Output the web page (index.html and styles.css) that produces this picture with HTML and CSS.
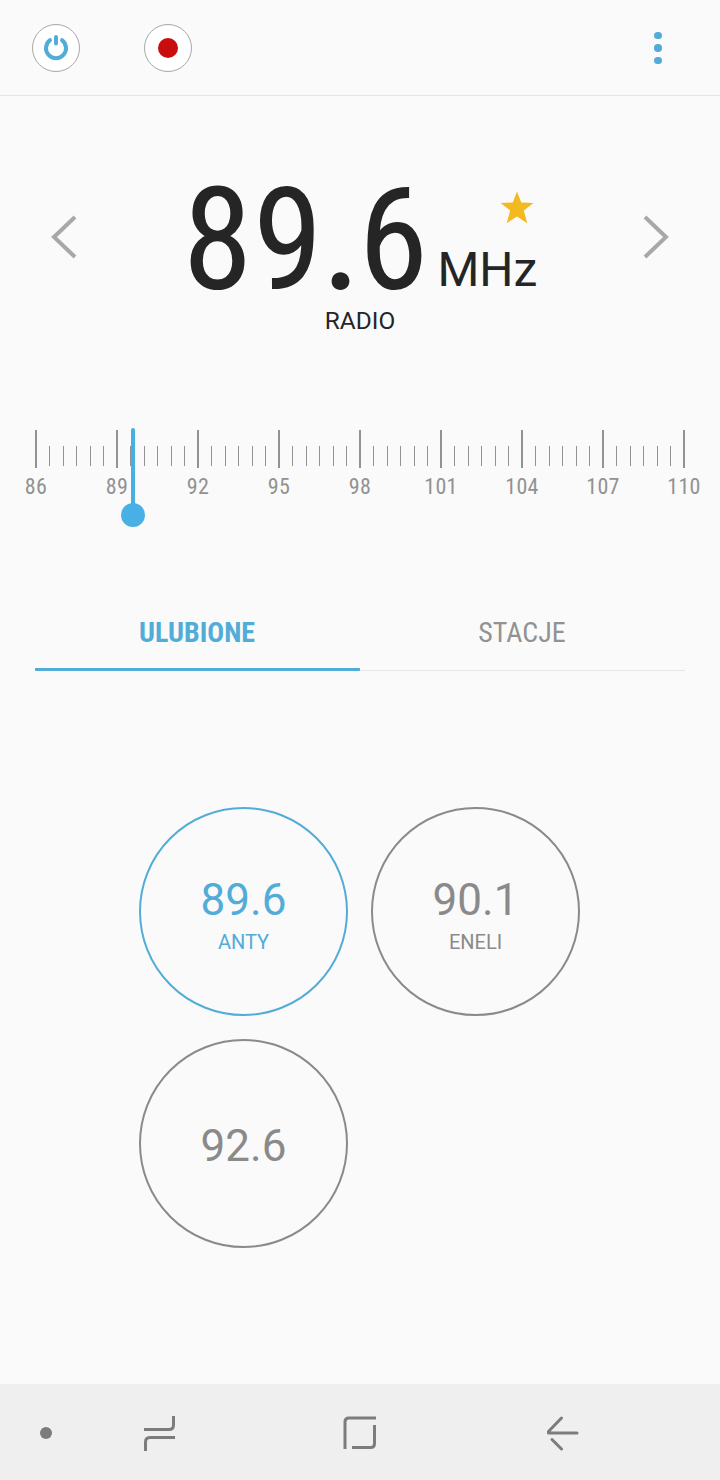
FILE: index.html
```html
<!DOCTYPE html>
<html lang="pl">
<head>
    <meta charset="UTF-8">
    <meta name="viewport" content="width=device-width, initial-scale=1.0">
    <title>Radio</title>
    <link rel="stylesheet" href="styles.css">
</head>
<body>
    <header class="toolbar">
        <button class="round-btn" aria-label="Power">
            <svg width="26" height="28" viewBox="0 0 26 28" fill="none" stroke="#52acd8" stroke-width="4" stroke-linecap="round">
                <path d="M13 3v6.500M7 6.200a10 10 0 1 0 12 0"/>
            </svg>
        </button>
        <button class="round-btn" aria-label="Record"><span class="rec-dot"></span></button>
        <button class="menu-btn" aria-label="Menu"><i></i><i></i><i></i></button>
    </header>

    <section class="tuner">
        <button class="arrow" aria-label="Previous">
            <svg width="28" height="46" viewBox="0 0 28 46"><path d="M25 3L4 23l21 20"/></svg>
        </button>
        <div class="display">
            <div class="frequency">
                <span class="value">89<span class="dot">.</span>6</span>
                <div class="unit">
                    <svg class="star" width="34" height="34" viewBox="0 0 34 34"><path d="M17 .5l4.300 11 12.200.4-9.700 7.600 3.500 12.700L17 25.500 6.700 32.200l3.500-12.700L.5 11.900l12.200-.4z"/></svg>
                    <span>MHz</span>
                </div>
            </div>
            <div class="station">RADIO</div>
        </div>
        <button class="arrow" aria-label="Next">
            <svg width="28" height="46" viewBox="0 0 28 46"><path d="M3 3l21 20L3 43"/></svg>
        </button>
    </section>

    <section class="scale">
        <svg class="ticks" width="650" height="38" viewBox="0 0 650 38">
            <defs>
                <g id="step">
                    <path class="major" d="M1 0v38"/>
                    <path class="minor" d="M14.5 16v20M28.5 16v20M41.5 16v20M55.5 16v20M68.5 16v20"/>
                </g>
            </defs>
            <use href="#step"/>
            <use href="#step" x="81"/>
            <use href="#step" x="162"/>
            <use href="#step" x="243"/>
            <use href="#step" x="324"/>
            <use href="#step" x="405"/>
            <use href="#step" x="486"/>
            <use href="#step" x="567"/>
            <path class="major" d="M649 0v38"/>
        </svg>
        <div class="labels">
            <span>86</span><span>89</span><span>92</span><span>95</span><span>98</span><span>101</span><span>104</span><span>107</span><span>110</span>
        </div>
        <div class="needle"></div>
    </section>

    <nav class="tabs">
        <a class="tab active">ULUBIONE</a>
        <a class="tab">STACJE</a>
    </nav>

    <main class="favorites">
        <div class="favorite active"><span class="num">89.6</span><span class="name">ANTY</span></div>
        <div class="favorite"><span class="num">90.1</span><span class="name">ENELI</span></div>
        <div class="favorite"><span class="num">92.6</span></div>
    </main>

    <footer class="navbar">
        <span class="nav-dot"></span>
        <svg class="recents" width="32" height="36" viewBox="0 0 32 36"><path d="M0 14.5h25q4.500 0 4.500-4.500V1M31 22.500H6q-4.500 0-4.500 4.500V36"/></svg>
        <svg class="home" width="34" height="34" viewBox="0 0 34 34"><path d="M33 2H6Q2 2 2 6v27M31.500 9v18.500q0 4-4 4H9"/></svg>
        <svg class="back" width="34" height="36" viewBox="0 0 34 36"><path d="M15.500 3L2.500 16.500V18H31M6 24.500L15.500 34"/></svg>
    </footer>
</body>
</html>
```

FILE: styles.css
```css
* {
    box-sizing: border-box;
}
body {
    display: flex;
    flex-direction: column;
    height: 1480px;
    margin: 0;
    overflow: hidden;
    background: #fafafa;
    color: #252525;
    font-family: Roboto, sans-serif;
}
button {
    padding: 0;
    border: none;
    background: none;
}
svg {
    display: block;
}
.toolbar {
    display: flex;
    align-items: center;
    gap: 64px;
    height: 96px;
    padding: 0 56px 0 32px;
    border-bottom: 1px solid #e4e4e4;
}
.round-btn {
    display: flex;
    align-items: center;
    justify-content: center;
    width: 48px;
    height: 48px;
    border: 1px solid #a6a6a6;
    border-radius: 50%;
    background: #fff;
}
.rec-dot {
    width: 20px;
    height: 20px;
    border-radius: 50%;
    background: #c90c0c;
}
.menu-btn {
    display: flex;
    flex-direction: column;
    align-items: center;
    gap: 4.800px;
    width: 12px;
    margin-left: auto;
    padding-top: 1px;
}
.menu-btn i {
    width: 7.500px;
    height: 7.500px;
    border-radius: 50%;
    background: #52acd8;
}

/* frequency display */
.tuner {
    display: flex;
    justify-content: space-between;
    height: 304px;
    padding: 70px 50px 0;
}
.arrow {
    height: 142px;
}
.arrow path {
    fill: none;
    stroke: #a8a8a8;
    stroke-width: 4;
}
.display {
    display: flex;
    flex-direction: column;
    align-items: center;
}
.frequency {
    display: flex;
    height: 140px;
}
.value {
    font-family: "Roboto Condensed", Roboto, sans-serif;
    font-stretch: 75%;
    font-size: 142px;
    font-weight: 450;
    line-height: 136px;
    margin-top: -3px;
}
.value .dot {
    margin: 0 1px;
    font-family: Lato, sans-serif;
    font-weight: 400;
    line-height: 1;
}
.unit {
    display: flex;
    flex-direction: column;
    align-items: flex-end;
    padding: 25px 0 0 9px;
    font-size: 48px;
    line-height: 56px;
}
.star {
    margin: 0 3px 17px 0;
    fill: #f3b920;
}
.station {
    font-size: 24.400px;
    line-height: 29px;
}

/* tuning scale */
.scale {
    position: relative;
    height: 190px;
    padding: 30px 35px 0;
}
.ticks path {
    stroke: #929292;
}
.ticks .major {
    stroke-width: 2;
}
.labels {
    display: grid;
    grid-template-columns: repeat(9, 81px);
    margin: 5px 0 0 -39.500px;
    color: #929292;
    font-family: "Roboto Condensed", Roboto, sans-serif;
    font-stretch: 75%;
    font-size: 22px;
    line-height: 28px;
    letter-spacing: 0.3px;
    text-align: center;
}
.needle {
    position: absolute;
    left: 131px;
    top: 28px;
    width: 4px;
    height: 80px;
    border-radius: 2px;
    background: #48b0e0;
}
.needle::after {
    content: "";
    position: absolute;
    left: -10px;
    top: 74.500px;
    width: 24px;
    height: 24px;
    border-radius: 50%;
    background: #48b0e4;
}

.tabs {
    display: grid;
    grid-template-columns: 1fr 1fr;
    height: 81px;
    margin: 0 35px;
    border-bottom: 1px solid #e6e6e6;
}
.tab {
    height: 81px;
    padding: 26px 1px 0 0;
    color: #929292;
    font-family: "Roboto Condensed", Roboto, sans-serif;
    font-stretch: 75%;
    font-size: 28px;
    line-height: 34px;
    text-align: center;
}
.tab.active {
    border-bottom: 3px solid #52acd8;
    border-radius: 1px;
    color: #52acd8;
    font-weight: 700;
}

.favorites {
    display: grid;
    grid-template-columns: 209px 209px;
    grid-auto-rows: 209px;
    gap: 23px;
    flex: 1;
    padding: 136px 0 0 139px;
}
.favorite {
    display: flex;
    flex-direction: column;
    align-items: center;
    justify-content: center;
    padding-top: 4px;
    border: 2px solid #8a8a8a;
    border-radius: 50%;
    color: #8a8a8a;
}
.favorite.active {
    border-color: #52acd8;
    color: #52acd8;
}
.num {
    font-size: 44px;
    line-height: 52px;
}
.name {
    margin: 2px 0 -2px;
    font-size: 20px;
    line-height: 28px;
}

/* system navigation */
.navbar {
    display: flex;
    align-items: center;
    height: 96px;
    padding: 2px 40px 0;
    background: #efefef;
}
.navbar path {
    fill: none;
    stroke: #7c7c7c;
    stroke-width: 3;
}
.nav-dot {
    width: 12px;
    height: 12px;
    border-radius: 50%;
    background: #7c7c7c;
}
.recents {
    margin-left: 92px;
}
.home {
    margin-left: 167px;
}
.back {
    margin-left: 169px;
    stroke-linecap: round;
    stroke-linejoin: round;
}
```
